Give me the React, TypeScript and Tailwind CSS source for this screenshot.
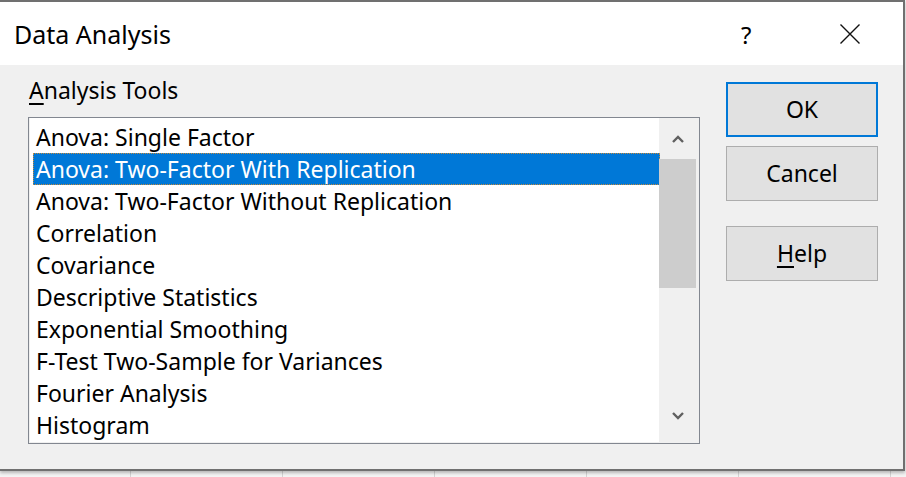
import React from "react";

const items = [
  "Anova: Single Factor",
  "Anova: Two-Factor With Replication",
  "Anova: Two-Factor Without Replication",
  "Correlation",
  "Covariance",
  "Descriptive Statistics",
  "Exponential Smoothing",
  "F-Test Two-Sample for Variances",
  "Fourier Analysis",
  "Histogram",
];

const font = { fontFamily: '"Noto Sans", "Open Sans", sans-serif' };

export default function App() {
  return (
    <div className="relative w-[906px] h-[477px] overflow-hidden bg-[#f4f4f4]" style={font}>
      {/* spreadsheet grid behind the dialog */}
      <div className="absolute inset-0 flex">
        <div className="w-[131px] shrink-0 border-r border-[#d4d4d4]" />
        <div className="w-[152px] shrink-0 border-r border-[#d4d4d4]" />
        <div className="w-[152px] shrink-0 border-r border-[#d4d4d4]" />
        <div className="w-[152px] shrink-0 border-r border-[#d4d4d4]" />
        <div className="w-[152px] shrink-0 border-r border-[#d4d4d4]" />
        <div className="w-[152px] shrink-0 border-r border-[#d4d4d4]" />
      </div>

      {/* dialog */}
      <div className="relative z-10 w-[905px] h-[471px] flex flex-col border-t-2 border-r-2 border-b-2 border-[#707070] bg-[#f0f0f0] shadow-[0_2px_3px_rgba(0,0,0,0.25)]">
        {/* title bar */}
        <div className="h-[63px] shrink-0 bg-white flex items-center">
          <div className="pl-[14px] text-[25px] text-black leading-none flex-1 pt-[2px]">Data Analysis</div>
          <div className="w-[12px] text-[24px] text-black leading-none pt-[2px] mr-[86px]">?</div>
          <svg width="22" height="22" viewBox="0 0 22 22" className="mr-[42px]">
            <path d="M1.5 1.5 L20.5 20.5 M20.5 1.5 L1.5 20.5" stroke="#111" strokeWidth="1.4" fill="none" />
          </svg>
        </div>

        {/* body */}
        <div className="flex-1 flex pl-[28px] pt-[11px]">
          <div className="flex flex-col w-[672px]">
            <div className="h-[41px] pl-[1px] text-[23px] leading-[28px] text-black">
              <span className="underline underline-offset-[4px] decoration-[1.5px]">A</span>nalysis Tools
            </div>
            <div className="h-[327px] flex border border-[#828790] bg-[#f0f0f0]">
              <div className="w-[630px] h-[324px] bg-white pt-[3px] pl-[3px] border-l border-[#f0f0f0]">
                {items.map((it, i) => (
                  <div
                    key={it}
                    className={
                      i === 1
                        ? "h-[32px] w-[627px] flex items-center pl-[2px] text-[23px] text-white bg-[#0078d7] border border-dotted border-[#c58a3c]"
                        : "h-[32px] w-[627px] flex items-center pl-[3px] text-[23px] text-black"
                    }
                  >
                    {it}
                  </div>
                ))}
              </div>
              <div className="w-[40px] flex flex-col">
                <div className="h-[41px] flex items-center justify-center pr-[3px]">
                  <svg width="14" height="10" viewBox="0 0 14 10">
                    <path d="M2 8 L7 3 L12 8" stroke="#606060" strokeWidth="2.4" fill="none" />
                  </svg>
                </div>
                <div className="w-[37px] h-[129px] bg-[#cdcdcd]" />
                <div className="flex-1" />
                <div className="h-[42px] flex items-start justify-center pr-[3px] pt-[10px]">
                  <svg width="14" height="10" viewBox="0 0 14 10">
                    <path d="M2 2 L7 7 L12 2" stroke="#606060" strokeWidth="2.4" fill="none" />
                  </svg>
                </div>
              </div>
            </div>
          </div>

          <div className="ml-[26px] pt-[6px] flex flex-col w-[152px]">
            <div className="h-[55px] flex items-center justify-center border-2 border-[#0078d7] bg-[#e1e1e1] text-[23px] text-black">
              OK
            </div>
            <div className="mt-[9px] h-[55px] flex items-center justify-center border border-[#adadad] bg-[#e1e1e1] text-[23px] text-black">
              Cancel
            </div>
            <div className="mt-[25px] h-[55px] flex items-center justify-center border border-[#adadad] bg-[#e1e1e1] text-[23px] text-black">
              <span>
                <span className="underline underline-offset-[4px] decoration-[1.5px]">H</span>elp
              </span>
            </div>
          </div>
        </div>
      </div>
    </div>
  );
}
